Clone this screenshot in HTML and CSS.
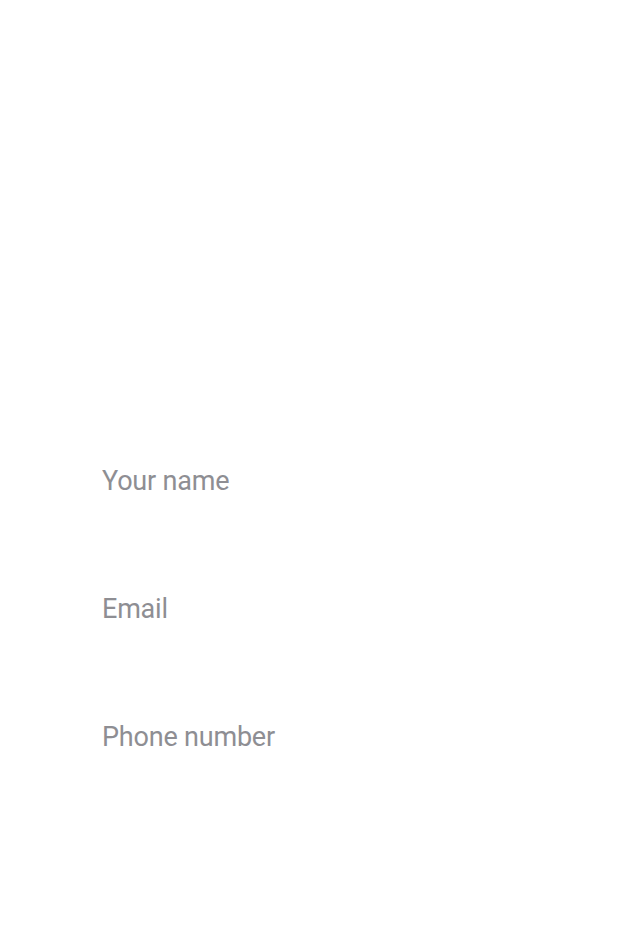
FILE: index.html
```html
<!DOCTYPE html>
<html lang="en">
<head>
<meta charset="utf-8">
<title>Contact form</title>
<link rel="stylesheet" href="styles.css">
</head>
<body>
<form class="form">
  <input class="field" type="text" placeholder="Your name">
  <input class="field" type="email" placeholder="Email">
  <input class="field" type="tel" placeholder="Phone number">
</form>
</body>
</html>
```

FILE: styles.css
```css
html, body {
  margin: 0;
  padding: 0;
  background: #ffffff;
}

.form {
  display: flex;
  flex-direction: column;
  padding: 417px 0 0 102px;
}

.field {
  display: block;
  box-sizing: border-box;
  width: 436px;
  height: 128px;
  padding: 0;
  margin: 0;
  border: none;
  outline: none;
  background: transparent;
  font-family: Roboto, "Liberation Sans", sans-serif;
  font-size: 27px;
  font-weight: 400;
  letter-spacing: -0.2px;
  color: #333333;
}

.field::placeholder {
  color: #8e8e93;
  opacity: 1;
}
```
